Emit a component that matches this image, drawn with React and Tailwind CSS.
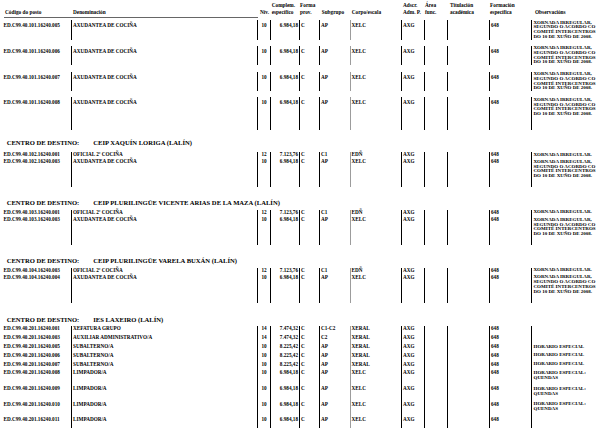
const GRID = 'grid grid-cols-[71px_186px_13px_29px_20px_31px_51px_23px_23px_42px_42px_85px]';
const LINE = 'border-l border-black';

const XORNADA = ['XORNADA IRREGULAR,', 'SEGUNDO O ACORDO CO', 'COMITÉ INTERCENTROS', 'DO 10 DE XUÑO DE 2008.'];
const XORN_SHORT = ['XORNADA IRREGULAR.'];
const HORARIO = ['HORARIO ESPECIAL'];
const QUENDAS = ['HORARIO ESPECIAL:', 'QUENDAS'];

const sections = [
  {
    title: null,
    mt: 'mt-[2.5px]',
    pad: 'pt-[3px]',
    obsPad: 'pt-[0.5px]',
    rows: [
      ['ED.C99.40.101.16240.005', 'AXUDANTEA DE COCIÑA', '10', '6.984,18', 'AP', 'XELC', XORNADA, 'h-[19.5px]'],
      ['ED.C99.40.101.16240.006', 'AXUDANTEA DE COCIÑA', '10', '6.984,18', 'AP', 'XELC', XORNADA, 'h-[19.5px] mt-[6.3px]'],
      ['ED.C99.40.101.16240.007', 'AXUDANTEA DE COCIÑA', '10', '6.984,18', 'AP', 'XELC', XORNADA, 'h-[19.5px] mt-[6.3px]'],
      ['ED.C99.40.101.16240.008', 'AXUDANTEA DE COCIÑA', '10', '6.984,18', 'AP', 'XELC', XORNADA, 'h-[32.6px] mt-[6.3px]'],
    ],
  },
  {
    title: 'CEIP XAQUÍN LORIGA (LALÍN)',
    headMt: 'mt-[8.7px]',
    mt: 'mt-[5.8px]',
    pad: 'pt-0',
    obsPad: 'pt-[0.5px]',
    rows: [
      ['ED.C99.40.102.16240.001', 'OFICIAL 2ª COCIÑA', '12', '7.123,76', 'C1', 'EDÑ', XORN_SHORT, 'h-[7px]'],
      ['ED.C99.40.102.16240.003', 'AXUDANTEA DE COCIÑA', '10', '6.984,18', 'AP', 'XELC', XORNADA, 'h-[27.5px]'],
    ],
  },
  {
    title: 'CEIP PLURILINGÜE VICENTE ARIAS DE LA MAZA (LALÍN)',
    headMt: 'mt-[11.7px]',
    mt: 'mt-[3.3px]',
    pad: 'pt-0',
    obsPad: 'pt-[0.5px]',
    rows: [
      ['ED.C99.40.103.16240.001', 'OFICIAL 2ª COCIÑA', '12', '7.123,76', 'C1', 'EDÑ', XORN_SHORT, 'h-[7.5px]'],
      ['ED.C99.40.103.16240.003', 'AXUDANTEA DE COCIÑA', '10', '6.984,18', 'AP', 'XELC', XORNADA, 'h-[27.5px]'],
    ],
  },
  {
    title: 'CEIP PLURILINGÜE VARELA BUXÁN (LALÍN)',
    headMt: 'mt-[12px]',
    mt: 'mt-[3px]',
    pad: 'pt-0',
    obsPad: 'pt-[0.5px]',
    rows: [
      ['ED.C99.40.104.16240.003', 'OFICIAL 2ª COCIÑA', '12', '7.123,76', 'C1', 'EDÑ', XORN_SHORT, 'h-[7px]'],
      ['ED.C99.40.104.16240.004', 'AXUDANTEA DE COCIÑA', '10', '6.984,18', 'AP', 'XELC', XORNADA, 'h-[28px]'],
    ],
  },
  {
    title: 'IES LAXEIRO (LALÍN)',
    headMt: 'mt-[13px]',
    mt: 'mt-[2.5px]',
    pad: 'pt-0',
    obsPad: 'pt-[0.5px]',
    rows: [
      ['ED.C99.40.201.16240.001', 'XEFATURA GRUPO', '14', '7.474,32', 'C1-C2', 'XERAL', [], 'h-[9px]'],
      ['ED.C99.40.201.16240.003', 'AUXILIAR ADMINISTRATIVO/A', '14', '7.474,32', 'C2', 'XERAL', [], 'h-[9px]'],
      ['ED.C99.40.201.16240.005', 'SUBALTERNO/A', '10', '8.225,42', 'AP', 'XERAL', HORARIO, 'h-[8.5px]'],
      ['ED.C99.40.201.16240.006', 'SUBALTERNO/A', '10', '8.225,42', 'AP', 'XERAL', HORARIO, 'h-[9px]'],
      ['ED.C99.40.201.16240.007', 'SUBALTERNO/A', '10', '8.225,42', 'AP', 'XERAL', HORARIO, 'h-[8.5px]'],
      ['ED.C99.40.201.16240.008', 'LIMPADOR/A', '10', '6.984,18', 'AP', 'XELC', QUENDAS, 'h-[16px]'],
      ['ED.C99.40.201.16240.009', 'LIMPADOR/A', '10', '6.984,18', 'AP', 'XELC', QUENDAS, 'h-[15.5px]'],
      ['ED.C99.40.201.16240.010', 'LIMPADOR/A', '10', '6.984,18', 'AP', 'XELC', QUENDAS, 'h-[15.5px]'],
      ['ED.C99.40.201.16240.011', 'LIMPADOR/A', '10', '6.984,18', 'AP', 'XELC', [], 'h-[10.5px]'],
    ],
  },
];

const Row = ({ r, pad, obsPad, extra }) => {
  const [code, denom, niv, comp, sub, corpo, obs, size] = r;
  return (
    <div className={`${GRID} ${size} ${extra || ''} text-[5.2px] leading-[5px]`}>
      <div className={`pl-[3.5px] ${pad}`}>{code}</div>
      <div className={`${LINE} pl-[1px] ${pad}`}>{denom}</div>
      <div className={`${LINE} text-center ${pad}`}>{niv}</div>
      <div className={`${LINE} text-right pr-[1px] ${pad}`}>{comp}</div>
      <div className={`${LINE} pl-[1px] ${pad}`}>C</div>
      <div className={`${LINE} pl-[1px] ${pad}`}>{sub}</div>
      <div className={`border-l-[1.5px] border-[#9c9c9c] pl-[0.5px] ${pad}`}>{corpo}</div>
      <div className={`${LINE} pl-[1px] ${pad}`}>AXG</div>
      <div className={LINE} />
      <div className={LINE} />
      <div className={`${LINE} pl-[1px] ${pad}`}>648</div>
      <div className={`border-l-[1.5px] border-black pl-[1.5px] text-[5px] leading-[4.7px] ${obsPad}`}>
        {obs.map((l, i) => (
          <div key={i}>{l}</div>
        ))}
      </div>
    </div>
  );
};

const Header = () => (
  <div className={`${GRID} pt-[1.5px] text-[5.3px] leading-[7.5px]`}>
    <div className="pl-[5px] flex flex-col justify-end">Código do posto</div>
    <div className="pl-[2px] flex flex-col justify-end">Denominación</div>
    <div className="pl-[3px] flex flex-col justify-end">Nív.</div>
    <div className="pl-[1.7px] flex flex-col"><span>Complem.</span><span>específico</span></div>
    <div className="pl-[1px] flex flex-col"><span>Forma</span><span>prov.</span></div>
    <div className="pl-[2.7px] flex flex-col justify-end">Subgrupo</div>
    <div className="pl-[1.7px] flex flex-col justify-end">Corpo/escala</div>
    <div className="pl-[2px] flex flex-col"><span>Adscr.</span><span>Adm. P.</span></div>
    <div className="pl-[1px] flex flex-col"><span>Área</span><span>func.</span></div>
    <div className="pl-[3px] flex flex-col"><span>Titulación</span><span>académica</span></div>
    <div className="pl-[1px] flex flex-col"><span>Formación</span><span>específica</span></div>
    <div className="pl-[4px] flex flex-col justify-end">Observacións</div>
  </div>
);

export default function App() {
  return (
    <div className="w-[616px] h-[439px] overflow-hidden bg-white text-black font-bold font-['Liberation_Serif',serif] whitespace-nowrap">
      <Header />
      <div className="ml-[4px] w-[254px] border-t border-black/60" />
      {sections.map((s, si) => (
        <div key={si}>
          {s.title && (
            <div className={`${s.headMt} pl-[6.7px] text-[6.6px] leading-[8px]`}>
              <span className="inline-block w-[86.6px]">CENTRO DE DESTINO:</span>
              <span>{s.title}</span>
            </div>
          )}
          {s.rows.map((r, ri) => (
            <Row key={ri} r={r} pad={s.pad} obsPad={s.obsPad} extra={ri === 0 ? s.mt : ''} />
          ))}
        </div>
      ))}
    </div>
  );
}
